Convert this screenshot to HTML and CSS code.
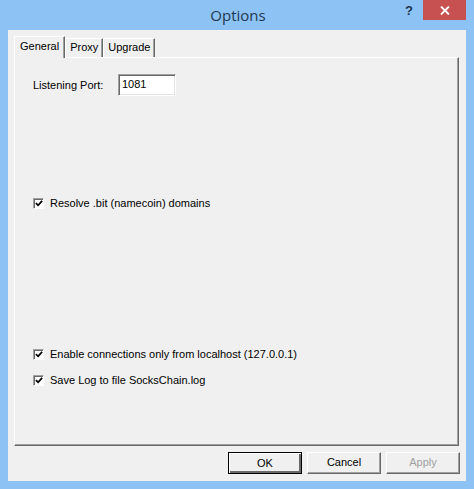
FILE: index.html
```html
<!DOCTYPE html>
<html>
<head>
<meta charset="utf-8">
<link rel="stylesheet" href="styles.css">
</head>
<body>
<div class="window">
  <div class="titlebar">
    <div class="title">Options</div>
    <div class="help">?</div>
    <div class="close">
      <svg width="10" height="9" viewBox="0 0 10 9"><path d="M1 0.5 L9 8.5 M9 0.5 L1 8.5" stroke="#fff" stroke-width="1.8" fill="none"/></svg>
    </div>
  </div>
  <div class="client">
    <div class="tabs">
      <div class="tab selected">General</div>
      <div class="tab">Proxy</div>
      <div class="tab">Upgrade</div>
    </div>
    <div class="panel">
      <div class="row port-row">
        <span class="label">Listening Port:</span>
        <div class="textbox">1081</div>
      </div>
      <div class="row check resolve">
        <span class="box"><svg width="9" height="9" viewBox="0 0 9 9"><path d="M1 4 L3.5 6.5 L8 1.5" stroke="#000" stroke-width="2" fill="none"/></svg></span>
        <span>Resolve .bit (namecoin) domains</span>
      </div>
      <div class="row check enable">
        <span class="box"><svg width="9" height="9" viewBox="0 0 9 9"><path d="M1 4 L3.5 6.5 L8 1.5" stroke="#000" stroke-width="2" fill="none"/></svg></span>
        <span>Enable connections only from localhost (127.0.0.1)</span>
      </div>
      <div class="row check save">
        <span class="box"><svg width="9" height="9" viewBox="0 0 9 9"><path d="M1 4 L3.5 6.5 L8 1.5" stroke="#000" stroke-width="2" fill="none"/></svg></span>
        <span>Save Log to file SocksChain.log</span>
      </div>
    </div>
    <div class="buttons">
      <div class="btn default">OK</div>
      <div class="btn">Cancel</div>
      <div class="btn disabled">Apply</div>
    </div>
  </div>
</div>
</body>
</html>
```

FILE: styles.css
```css
html, body {
  margin: 0;
  padding: 0;
}
body {
  width: 474px;
  height: 489px;
  background: #8cc3f4;
  font-family: "Liberation Sans", Arial, sans-serif;
  font-size: 11px;
  color: #000;
  overflow: hidden;
}
.window {
  width: 474px;
  height: 489px;
  display: flex;
  flex-direction: column;
}
.titlebar {
  height: 30px;
  position: relative;
  flex: none;
}
.title {
  text-align: center;
  font-family: "Open Sans", "Noto Sans", sans-serif;
  font-size: 15px;
  line-height: 30px;
  color: #22384f;
  padding-left: 2px;
}
.help {
  position: absolute;
  left: 405px;
  top: 3px;
  font-family: "Liberation Sans", Arial, sans-serif;
  font-weight: bold;
  font-size: 13px;
  color: #1f3550;
}
.close {
  position: absolute;
  left: 423px;
  top: 0;
  width: 43px;
  height: 20px;
  background: #c75050;
  display: flex;
  align-items: center;
  justify-content: center;
}
.client {
  flex: none;
  margin: 0 8px;
  height: 451px;
  background: #f0f0f0;
  display: flex;
  flex-direction: column;
  padding-left: 6px;
  box-sizing: border-box;
}
.tabs {
  display: flex;
  align-items: flex-end;
  height: 27px;
  padding-top: 7px;
  box-sizing: border-box;
  position: relative;
  z-index: 1;
}
.tab {
  height: 18px;
  line-height: 17px;
  padding: 0 4px;
  border-top: 1px solid #ffffff;
  border-left: 1px solid #ffffff;
  border-right: 1px solid #696969;
  box-shadow: inset -1px 0 #a0a0a0;
  background: #f0f0f0;
}
.tab.selected {
  height: 21px;
  line-height: 19px;
  padding: 0 5px 0 5px;
  margin-bottom: -1px;
}
.panel {
  width: 445px;
  height: 389px;
  box-sizing: border-box;
  border-top: 1px solid #ffffff;
  border-left: 1px solid #ffffff;
  border-right: 1px solid #696969;
  border-bottom: 1px solid #696969;
  box-shadow: inset -1px -1px #a0a0a0;
  padding: 16px 0 0 18px;
  display: flex;
  flex-direction: column;
}
.row {
  display: flex;
  align-items: center;
}
.port-row {
  height: 22px;
}
.label {
  width: 85px;
  flex: none;
}
.textbox {
  width: 58px;
  height: 22px;
  box-sizing: border-box;
  background: #fff;
  border-top: 1px solid #a0a0a0;
  border-left: 1px solid #a0a0a0;
  border-right: 1px solid #ffffff;
  border-bottom: 1px solid #ffffff;
  box-shadow: inset 1px 1px #696969, inset -1px -1px #e3e3e3;
  padding: 2px 3px;
  line-height: 14px;
}
.check {
  height: 16px;
}
.box {
  width: 11px;
  height: 11px;
  box-sizing: border-box;
  background: #fff;
  border-top: 1px solid #a0a0a0;
  border-left: 1px solid #a0a0a0;
  border-right: 1px solid #ffffff;
  border-bottom: 1px solid #ffffff;
  box-shadow: inset 1px 1px #696969;
  display: flex;
  align-items: center;
  justify-content: center;
  margin-right: 6px;
  flex: none;
}
.box svg {
  margin: 1px 0 0 1px;
}
.resolve {
  margin-top: 99px;
}
.enable {
  margin-top: 135px;
}
.save {
  margin-top: 10px;
}
.buttons {
  display: flex;
  justify-content: flex-end;
  gap: 5px;
  padding-right: 6px;
  margin-top: 6px;
}
.btn {
  width: 74px;
  height: 22px;
  box-sizing: border-box;
  text-align: center;
  line-height: 19px;
  border-top: 1px solid #ffffff;
  border-left: 1px solid #ffffff;
  border-right: 1px solid #696969;
  border-bottom: 1px solid #696969;
  box-shadow: inset -1px -1px #a0a0a0;
  background: #f0f0f0;
}
.btn.default {
  border: 1px solid #000;
  box-shadow: inset 1px 1px #fff, inset -2px -2px #696969;
  line-height: 20px;
}
.btn.disabled {
  color: #a0a0a0;
}
```
